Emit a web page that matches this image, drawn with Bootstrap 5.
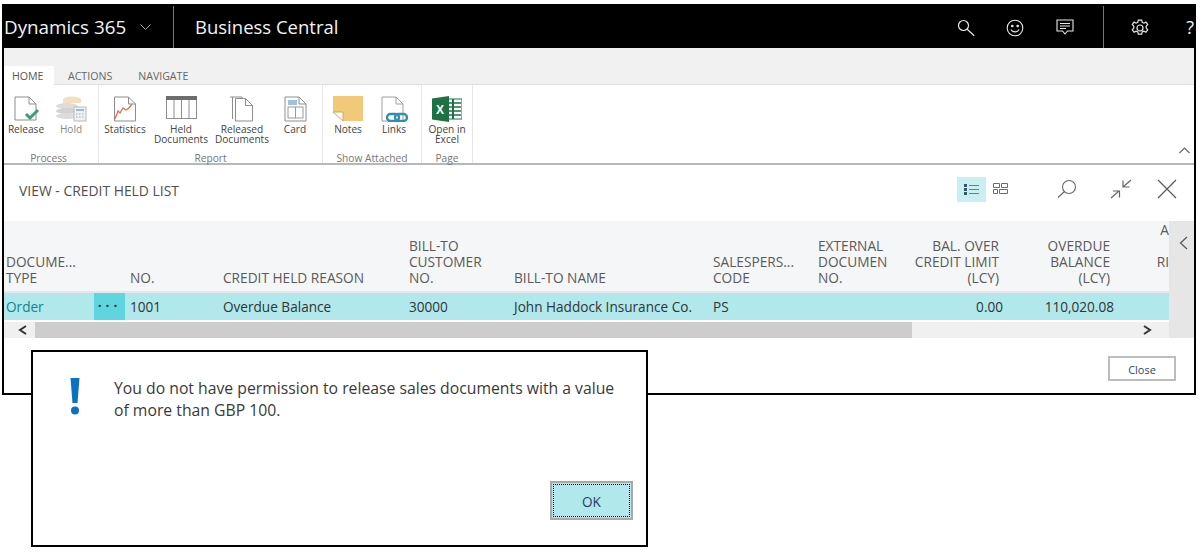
<!DOCTYPE html>
<html lang="en">
  <head>
    <meta charset="UTF-8" />
    <meta name="viewport" content="width=device-width, initial-scale=1.0" />
    <title>Credit Held List</title>
    <link href="https://cdn.jsdelivr.net/npm/bootstrap@5.3.0/dist/css/bootstrap.min.css" rel="stylesheet" />
    <style>
      body {
        font-family: "Open Sans", "Noto Sans", sans-serif;
        background: #fff;
        color: #333;
        overflow: hidden;
      }
      .page-wrap { padding: 4px 0 0 2px; position: relative; height: 553px; }
      .app-window {
        width: 1194px;
        height: 391px;
        border-left: 2px solid #000;
        border-right: 2px solid #000;
        border-bottom: 2px solid #000;
        display: flex;
        flex-direction: column;
      }
      /* top bar */
      .top-bar { height: 44px; background: #000; color: #f2f2f2; flex: none; }
      .brand { width: 170px; height: 42px; margin-top: 2px; border-right: 1px solid #777; font-size: 18.8px; }
      .brand svg { margin-left: 14px; }
      .app-name { font-size: 18.5px; padding-left: 21px; margin-top: 2px; }
      .top-icons { margin-left: auto; height: 42px; margin-top: 2px; }
      .top-ico { position: relative; top: -1px; width: 49.5px; text-align: center; }
      .top-sep { width: 1px; height: 42px; background: #777; margin: 0 0 0 13px; }
      .gear-ico { margin-left: 12px; }
      .help-mark { font-size: 18px; width: 30px; margin-left: -1px; text-align: right; overflow: hidden; white-space: nowrap; }
      /* ribbon */
      .tab-strip { height: 37px; background: #f1f1f1; border-bottom: 1px solid #dcdfe6; flex: none; align-items: flex-end; }
      .rb-tab { font-size: 10.6px; color: #666; height: 19px; line-height: 21px; padding: 0 12px; margin-bottom: -1px; }
      .rb-tab.on { background: #fff; color: #555; width: 50px; padding: 0 0 0 8px; }
      .rb-tab.second { padding-left: 14px; }
      .rb-tab.third { padding-left: 14px; }
      .ribbon { height: 80px; border-bottom: 2px solid #b4b9be; flex: none; position: relative; }
      .rb-group { border-right: 1px solid #e6e6e6; height: 78px; position: relative; flex: none; }
      .grp-process { width: 95px; }
      .grp-report { width: 224px; }
      .grp-attached { width: 99px; }
      .grp-page { width: 51px; }
      .rb-cap { position: absolute; left: 0; right: 0; bottom: -3px; height: 16px; line-height: 16px; text-align: center; font-size: 10.2px; color: #777; white-space: nowrap; }
      .grp-process .rb-cap { right: 5px; }
      .rb-btn { flex: none; text-align: center; font-size: 10.1px; line-height: 10px; color: #444; padding-top: 11px; white-space: nowrap; }
      .rb-btn svg { display: block; margin: 0 auto 2px; }
      .rb-btn.muted { color: #888; }
      .bw-42 { width: 42px; }
      .bw-44 { width: 44px; }
      .bw-46 { width: 46px; }
      .bw-50 { width: 50px; }
      .bw-52 { width: 52px; }
      .bw-60 { width: 60px; }
      .bw-62 { width: 62px; }
      .rb-collapse { position: absolute; right: 4px; bottom: 2px; }
      /* view header */
      .view-head { height: 56px; flex: none; font-size: 13.9px; color: #505050; padding: 0 0 3px 15px; }
      .view-tools { margin-left: auto; margin-bottom: 6px; }
      .view-on { width: 29px; height: 25px; background: #c9eff3; margin-top: 1px; }
      .tool-cards { margin-left: 7px; }
      .tool-find { margin-left: 49px; }
      .tool-shrink { margin-left: 33px; }
      .tool-close { margin-left: 25px; margin-right: 17px; }
      /* list */
      .list-pane { flex: none; height: 117px; }
      .list-main { width: 1165px; overflow: hidden; flex: none; }
      .side-rail { flex: 1; background: #e6e6e6; text-align: center; padding: 8px 0 0 3px; }
      .grid-tbl { table-layout: fixed; width: 1205px; margin: 0; font-size: 13.7px; --bs-table-bg: transparent; }
      .grid-tbl th, .grid-tbl td { border: 0; white-space: nowrap; overflow: hidden; padding: 0 5px; }
      .grid-tbl thead th { height: 71px; background: #f5f6f7; color: #5a5a5a; font-weight: 400; line-height: 16px; vertical-align: bottom; padding-bottom: 5px; border-bottom: 2px solid #e4e6e8; }
      .grid-tbl thead th.num { text-align: right; padding-right: 4px; padding-left: 0; }
      .grid-tbl thead th.last-col { text-align: right; padding-right: 40px; }
      .grid-tbl tbody td { height: 28px; background: #b0e8ec; color: #333; vertical-align: middle; font-size: 13.6px; padding-top: 1px; }
      .grid-tbl tbody td.num { text-align: right; padding-right: 0; padding-left: 0; }
      .grid-tbl .first-col { padding-left: 2px; padding-right: 0; }
      .grid-tbl td.doc-link { color: #0f8489; padding-left: 2px; }
      .grid-tbl td.dots-cell { background: #5fd5e0; text-align: center; padding: 0; letter-spacing: 4px; font-weight: 700; color: #333; }
      .cw-90 { width: 90px; }
      .cw-31 { width: 31px; }
      .cw-93 { width: 93px; }
      .cw-186 { width: 186px; }
      .cw-105 { width: 105px; }
      .cw-199 { width: 199px; }
      .cw-100 { width: 100px; }
      .cw-111 { width: 111px; }
      .cw-95 { width: 95px; }
      .h-scroll { height: 16px; margin-top: 2px; background: #f0f0f0; position: relative; }
      .h-thumb { position: absolute; left: 31px; top: 0; bottom: 0; width: 877px; background: #cdcdcd; }
      .h-arrow { position: absolute; top: 3px; }
      .h-arrow.back { left: 14px; }
      .h-arrow.fwd { left: 1139px; }
      /* footer */
      .foot-bar { flex: 1; padding: 18px 18px 0 0; }
      .close-btn { width: 68px; height: 25px; border: 2px solid #bdbdbd; border-radius: 0; background: #fff; color: #2d4a68; font-size: 11px; padding: 3px 0 0; }
      /* message dialog */
      .msg-box { position: absolute; left: 31px; top: 350px; width: 617px; height: 197px; background: #fff; border: 2px solid #000; }
      .msg-body { padding: 26px 20px 0 37px; }
      .msg-text { font-size: 15.75px; line-height: 22px; color: #3a3a3a; margin: -1px 0 0; width: 544px; padding-left: 34px; }
      .ok-btn { position: absolute; right: 13px; bottom: 25px; width: 83px; height: 39px; border: 2px solid #a9a9a9; border-radius: 0; background: #b0e8ec; padding: 0; color: #1d3d63; font-size: 13.6px; }
      .ok-inner { display: block; margin: 1px; height: 33px; line-height: 33px; border: 1px dotted #000; }
    </style>
  </head>
  <body>
    <div class="page-wrap">
      <div class="app-window">
        <div class="top-bar d-flex">
          <div class="brand d-flex align-items-center">Dynamics 365
            <svg width="11" height="6" viewBox="0 0 11 6" fill="none" stroke="#aaa"><path d="M.5.5l5 5 5-5" /></svg>
          </div>
          <div class="app-name d-flex align-items-center">Business Central</div>
          <div class="top-icons d-flex align-items-center">
            <div class="top-ico">
              <svg width="18" height="18" viewBox="0 0 18 18" fill="none" stroke="#e8e8e8" stroke-width="1.2"><circle cx="6.5" cy="6.5" r="5" /><path d="M10.2 10.2l7 6.5" /></svg>
            </div>
            <div class="top-ico">
              <svg width="18" height="18" viewBox="0 0 18 18" fill="none" stroke="#e8e8e8" stroke-width="1.1"><circle cx="9" cy="9" r="7.8" /><circle cx="6.3" cy="7" r=".8" fill="#e8e8e8" /><circle cx="11.7" cy="7" r=".8" fill="#e8e8e8" /><path d="M5 10.5c1.5 3.2 6.500 3.200 8 0" /></svg>
            </div>
            <div class="top-ico">
              <svg width="18" height="17" viewBox="0 0 18 17" fill="none" stroke="#e8e8e8" stroke-width="1.1"><path d="M1 1h16v11h-5.500l-2.500 3-2.500-3H1z" /><path d="M4 4.500h10M4 7h10M4 9.500h6" /></svg>
            </div>
            <div class="top-sep"></div>
            <div class="top-ico gear-ico">
              <svg width="18" height="18" viewBox="0 0 18 18" fill="none" stroke="#e8e8e8" stroke-width="1.2"><path d="M7.300 1.200h3.400l.5 2.200 1.700.8 2-1.100 1.800 2.400-1.500 1.700v1.900l1.500 1.700-1.800 2.500-2-1.100-1.700.7-.5 2.300H7.300l-.5-2.300-1.700-.7-2 1.100-1.800-2.500 1.500-1.700V7.200L1.300 5.500l1.800-2.400 2 1.100 1.700-.8z" /><circle cx="9" cy="9" r="3" /></svg>
            </div>
            <div class="help-mark">?</div>
          </div>
        </div>

        <div class="tab-strip d-flex nav">
          <div class="rb-tab on">HOME</div>
          <div class="rb-tab second">ACTIONS</div>
          <div class="rb-tab third">NAVIGATE</div>
        </div>

        <div class="ribbon d-flex">
          <div class="rb-group grp-process d-flex">
            <div class="rb-btn bw-44">
              <svg width="30" height="26" viewBox="0 0 30 26" fill="none"><path d="M4 1h14l7 7v16H4z" stroke="#8d8d8d" /><path d="M18 1v7h7" stroke="#8d8d8d" /><path d="M15 18l4 4 8-8" stroke="#3a9d7a" stroke-width="3" /></svg>
              Release
            </div>
            <div class="rb-btn muted bw-46">
              <svg width="32" height="26" viewBox="0 0 32 26" fill="none"><ellipse cx="17" cy="3.500" rx="9" ry="3" fill="#f4dfc0" /><rect x="8" y="4" width="18" height="3" fill="#f4dfc0" /><ellipse cx="12" cy="10" rx="11" ry="3" fill="#dcdcdc" /><ellipse cx="12" cy="15" rx="11" ry="3" fill="#d2d2d2" /><ellipse cx="12" cy="20" rx="11" ry="3" fill="#dcdcdc" /><rect x="19" y="11" width="12" height="14" fill="#eef0f2" stroke="#bbb" /><path d="M21 14h8" stroke="#9db9cc" stroke-width="2" /><path d="M21 18h8M21 21h8" stroke="#aaa" stroke-dasharray="1.500 1.500" /></svg>
              Hold
            </div>
            <div class="rb-cap">Process</div>
          </div>
          <div class="rb-group grp-report d-flex">
            <div class="rb-btn bw-52">
              <svg width="24" height="26" viewBox="0 0 24 26" fill="none"><path d="M1.500 1h14l7 7v17h-21z" stroke="#8d8d8d" /><path d="M15.500 1v7h7" stroke="#8d8d8d" /><path d="M2 23l3-8 2 2 3-5 3 2 3-2 3-4" stroke="#e0704e" stroke-width="1.300" /></svg>
              Statistics
            </div>
            <div class="rb-btn bw-60">
              <svg width="31" height="24" viewBox="0 0 31 24" fill="none" class="mb-1"><rect x=".5" y=".5" width="30" height="22" stroke="#8d8d8d" /><rect x="0" y="0" width="31" height="4" fill="#6d6d6d" /><path d="M8 4v19M15.500 4v19M23 4v19" stroke="#8d8d8d" /></svg>
              Held<br />Documents
            </div>
            <div class="rb-btn bw-62">
              <svg width="26" height="26" viewBox="0 0 26 26" fill="none" stroke="#8d8d8d"><path d="M1 1h12v20" /><path d="M3.500 1v22" /><path d="M6.500 2.500h10l7 7v15.500h-17z" fill="#fff" /><path d="M16.500 2.500v7h7" /></svg>
              Released<br />Documents
            </div>
            <div class="rb-btn bw-44">
              <svg width="23" height="26" viewBox="0 0 23 26" fill="none"><path d="M1 1h14l7 7v17H1z" stroke="#8d8d8d" /><path d="M15 1v7h7" stroke="#8d8d8d" /><rect x="4" y="4" width="9" height="5" fill="#9cc3e6" /><rect x="4" y="11" width="15" height="11" stroke="#9a9a9a" /><path d="M11.500 11v11" stroke="#9a9a9a" /></svg>
              Card
            </div>
            <div class="rb-cap">Report</div>
          </div>
          <div class="rb-group grp-attached d-flex">
            <div class="rb-btn bw-50">
              <svg width="30" height="26" viewBox="0 0 30 26"><path d="M0 0h30v25H10L0 16z" fill="#f2c879" /><path d="M0 16h10v9z" fill="#fff" stroke="#c9a868" /></svg>
              Notes
            </div>
            <div class="rb-btn bw-42">
              <svg width="30" height="26" viewBox="0 0 30 26" fill="none"><path d="M3 1h14l7 7v17H3z" stroke="#a0a0a0" /><path d="M17 1v7h7" stroke="#a0a0a0" /><rect x="8" y="18" width="12" height="7" rx="3.500" stroke="#2f8fae" stroke-width="2.400" /><rect x="16" y="18" width="12" height="7" rx="3.500" stroke="#2f8fae" stroke-width="2.400" /></svg>
              Links
            </div>
            <div class="rb-cap">Show Attached</div>
          </div>
          <div class="rb-group grp-page d-flex">
            <div class="rb-btn bw-50">
              <svg width="30" height="26" viewBox="0 0 30 26"><rect x="13" y="3" width="17" height="20" fill="#fff" stroke="#1e7145" /><path d="M14 7h15M14 11h15M14 15h15M14 19h15" stroke="#1e7145" stroke-width="1.500" /><path d="M21 3v20" stroke="#1e7145" stroke-width="2" /><path d="M0 2.500L17 0v26L0 23.500z" fill="#1e7145" /><text x="4" y="18" font-size="12" font-weight="700" fill="#fff" font-family="Liberation Sans, sans-serif">X</text></svg>
              Open in<br />Excel
            </div>
            <div class="rb-cap">Page</div>
          </div>
          <div class="rb-collapse">
            <svg width="11" height="7" viewBox="0 0 11 7" fill="none" stroke="#666" stroke-width="1.200"><path d="M.5 6l5-5 5 5" /></svg>
          </div>
        </div>

        <div class="view-head d-flex align-items-center">
          <div>VIEW - CREDIT HELD LIST</div>
          <div class="view-tools d-flex align-items-center">
            <div class="view-on d-flex align-items-center justify-content-center">
              <svg width="15" height="11" viewBox="0 0 15 11"><path d="M0 0h3v3H0zM0 4h3v3H0zM0 8h3v3H0z" fill="#34546c" /><path d="M5 1.500h10M5 5.500h10M5 9.500h10" stroke="#6b7f8d" /></svg>
            </div>
            <svg class="tool-cards" width="15" height="11" viewBox="0 0 15 11" fill="none" stroke="#5f6f7a"><path d="M.5.500h6v4h-6zM8.500.500h6v4h-6zM.5 6.500h4v4h-4zM6.500 6.500h8v4h-8z" /></svg>
            <svg class="tool-find" width="20" height="20" viewBox="0 0 20 20" fill="none" stroke="#666" stroke-width="1.100"><circle cx="12" cy="8" r="6.500" /><path d="M7.500 12.500L1 18.500" /></svg>
            <svg class="tool-shrink" width="22" height="20" viewBox="0 0 22 20" fill="none" stroke="#666" stroke-width="1.200"><path d="M1 19l8-7M3 12h6.500v6.500" /><path d="M21 1l-8 7M13 1.500V8h6.500" /></svg>
            <svg class="tool-close" width="20" height="20" viewBox="0 0 20 20" fill="none" stroke="#555" stroke-width="1.100"><path d="M1 1l18 18M19 1L1 19" /></svg>
          </div>
        </div>

        <div class="list-pane d-flex">
          <div class="list-main">
            <table class="table grid-tbl">
              <colgroup>
                <col class="cw-90" /><col class="cw-31" /><col class="cw-93" /><col class="cw-186" /><col class="cw-105" /><col class="cw-199" /><col class="cw-105" /><col class="cw-90" /><col class="cw-100" /><col class="cw-111" /><col class="cw-95" />
              </colgroup>
              <thead>
                <tr>
                  <th class="first-col">DOCUME...<br />TYPE</th>
                  <th></th>
                  <th>NO.</th>
                  <th>CREDIT HELD REASON</th>
                  <th>BILL-TO<br />CUSTOMER<br />NO.</th>
                  <th>BILL-TO NAME</th>
                  <th>SALESPERS...<br />CODE</th>
                  <th>EXTERNAL<br />DOCUMEN<br />NO.</th>
                  <th class="num">BAL. OVER<br />CREDIT LIMIT<br />(LCY)</th>
                  <th class="num">OVERDUE<br />BALANCE<br />(LCY)</th>
                  <th class="last-col">A<br />&nbsp;<br />RI<br />&nbsp;</th>
                </tr>
              </thead>
              <tbody>
                <tr>
                  <td class="doc-link">Order</td>
                  <td class="dots-cell">···</td>
                  <td>1001</td>
                  <td>Overdue Balance</td>
                  <td>30000</td>
                  <td>John Haddock Insurance Co.</td>
                  <td>PS</td>
                  <td></td>
                  <td class="num">0.00</td>
                  <td class="num">110,020.08</td>
                  <td></td>
                </tr>
              </tbody>
            </table>
            <div class="h-scroll">
              <div class="h-thumb"></div>
              <svg class="h-arrow back" width="9" height="10" viewBox="0 0 9 10" fill="none" stroke="#333" stroke-width="2"><path d="M8 1L2 5l6 4" /></svg>
              <svg class="h-arrow fwd" width="9" height="10" viewBox="0 0 9 10" fill="none" stroke="#333" stroke-width="2"><path d="M1 1l6 4-6 4" /></svg>
            </div>
          </div>
          <div class="side-rail">
            <svg width="9" height="14" viewBox="0 0 9 14" fill="none" stroke="#555" stroke-width="1.200"><path d="M8 1L1.500 7 8 13" /></svg>
          </div>
        </div>

        <div class="foot-bar d-flex justify-content-end align-items-start">
          <button type="button" class="btn close-btn">Close</button>
        </div>
      </div>

      <div class="msg-box">
        <div class="msg-body d-flex">
          <svg class="flex-shrink-0" width="10" height="37" viewBox="0 0 10 37"><path d="M0.500 0h9l-2 25h-5z" fill="#0a72c4" /><circle cx="5" cy="32.500" r="4" fill="#0a72c4" /></svg>
          <p class="msg-text">You do not have permission to release sales documents with a value of more than GBP 100.</p>
        </div>
        <button type="button" class="btn ok-btn"><span class="ok-inner">OK</span></button>
      </div>
    </div>
    <script src="https://cdn.jsdelivr.net/npm/bootstrap@5.3.0/dist/js/bootstrap.bundle.min.js"></script>
  </body>
</html>
